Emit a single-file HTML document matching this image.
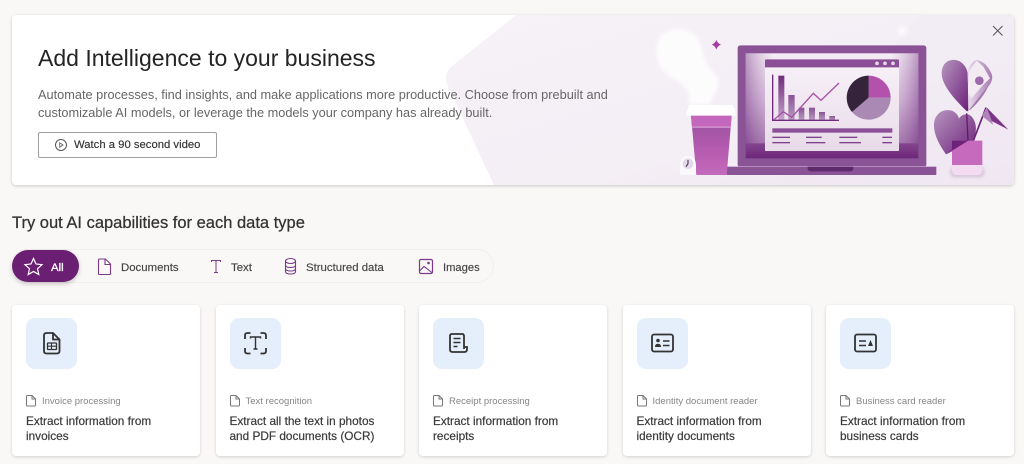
<!DOCTYPE html>
<html><head><meta charset="utf-8">
<style>
*{box-sizing:border-box}
html,body{margin:0;padding:0}
body{width:1024px;height:464px;overflow:hidden;background:#faf8f7;font-family:"Liberation Sans",sans-serif;position:relative}
.t{position:absolute;white-space:nowrap}
.banner{position:absolute;left:12px;top:15px;width:1002px;height:170px;background:#fff;border-radius:4px;box-shadow:0 1px 3px rgba(0,0,0,.2);overflow:hidden}
.card{position:absolute;top:305px;width:188px;height:151px;background:#fff;border-radius:4px;box-shadow:0 1px 3px rgba(0,0,0,.16)}
.ib{position:absolute;left:14px;top:13px;width:51px;height:51px;background:#e5eefb;border-radius:9px}
.ib svg{position:absolute;left:0;top:0}
.lbl{position:absolute;left:30px;top:90px;font-size:9.5px;line-height:13px;color:#858585;white-space:nowrap}
.doc{position:absolute;left:13px;top:90px}
.ttl{position:absolute;left:14px;top:109px;font-size:11.8px;line-height:15px;color:#3a3a3a;white-space:nowrap;-webkit-text-stroke:.2px #3a3a3a}
.tab{position:absolute;top:260.5px;font-size:11.4px;line-height:14px;color:#444;white-space:nowrap;-webkit-text-stroke:.15px #444}
</style></head><body>
<div class="banner"></div>
<svg style="position:absolute;left:0;top:0" width="1024" height="464" viewBox="0 0 1024 464">
<defs>
<linearGradient id="bg" x1="0" y1="0" x2="1" y2="1"><stop offset="0" stop-color="#f6f2f7"/><stop offset=".6" stop-color="#f4eef5"/><stop offset="1" stop-color="#f0e6f1"/></linearGradient>
<linearGradient id="scr" x1="0" y1="0" x2="0" y2="1"><stop offset="0" stop-color="#f1e6f1"/><stop offset=".45" stop-color="#c49fca"/><stop offset="1" stop-color="#6d2679"/></linearGradient>
<linearGradient id="scrs" x1="0" y1="0" x2="1" y2="0"><stop offset="0" stop-color="#8f5a9c" stop-opacity=".55"/><stop offset=".16" stop-color="#fff" stop-opacity=".3"/><stop offset=".84" stop-color="#fff" stop-opacity=".3"/><stop offset="1" stop-color="#8f5a9c" stop-opacity=".55"/></linearGradient>
<linearGradient id="win" x1="0" y1="0" x2="0" y2="1"><stop offset="0" stop-color="#f8f2f8"/><stop offset="1" stop-color="#e8dbe9"/></linearGradient>
<linearGradient id="bar" x1="0" y1="0" x2="0" y2="1"><stop offset="0" stop-color="#6f2a7c"/><stop offset="1" stop-color="#c6a4cc"/></linearGradient>
<linearGradient id="bar2" x1="0" y1="0" x2="0" y2="1"><stop offset="0" stop-color="#8a5296"/><stop offset="1" stop-color="#b9a0c0"/></linearGradient>
<linearGradient id="cup" x1="0" y1="0" x2="0" y2="1"><stop offset="0" stop-color="#99509f"/><stop offset=".6" stop-color="#b65cb0"/><stop offset="1" stop-color="#c46abc"/></linearGradient>
<linearGradient id="leaf" x1="0" y1="0" x2="1" y2="1"><stop offset="0" stop-color="#b796c0"/><stop offset="1" stop-color="#6c2279"/></linearGradient>
<linearGradient id="leaf2" x1="0" y1="0" x2="1" y2="0"><stop offset="0" stop-color="#e9dcec"/><stop offset="1" stop-color="#a77bb2"/></linearGradient>
<filter id="bl" x="-20%" y="-20%" width="140%" height="140%"><feGaussianBlur stdDeviation="6"/></filter>
<filter id="s" x="-5%" y="-5%" width="110%" height="110%"><feGaussianBlur stdDeviation=".3"/></filter>
<filter id="sh" x="-20%" y="-20%" width="140%" height="140%"><feGaussianBlur stdDeviation="4"/></filter>
<clipPath id="bc"><rect x="12" y="15" width="1002" height="170" rx="4"/></clipPath>
</defs>
<g clip-path="url(#bc)">
<path d="M516 15 L1014 15 L1014 185 L494 185 L447 84 Q443 74 452 66 Z" fill="url(#bg)"/>
<path d="M918 15 L1014 15 L1014 185 L780 185 Z" fill="#efe7f1" opacity=".3"/>
</g>
<g transform="translate(640 10) scale(.33333)" filter="url(#s)">
<path d="M50 115 Q55 58 115 58 Q175 60 186 120 Q192 160 228 195 Q246 225 220 255 L208 285 L148 285 L146 245 Q120 210 88 200 Q48 172 50 115Z" fill="#fff" opacity=".8" filter="url(#bl)"/>
<path d="M772 62 L787 46 L808 62 L790 72 L784 84Z" fill="#fff" opacity=".7" filter="url(#bl)"/>
<path d="M229 90 Q233 100 243 104 Q233 108 229 118 Q225 108 215 104 Q225 100 229 90Z" fill="#a43f9f"/>
<!-- laptop -->
<rect x="293" y="106" width="566" height="366" rx="8" fill="#8a5296"/>
<rect x="317" y="130" width="518" height="315" fill="url(#scr)"/>
<rect x="317" y="130" width="518" height="270" fill="url(#scrs)"/>
<rect x="260" y="470" width="629" height="25" fill="#8a5296"/>
<rect x="293" y="468" width="566" height="2" fill="#c9abcf"/>
<path d="M503 470H640V476Q640 484 630 484H513Q503 484 503 476Z" fill="#5f2a6c"/>
<!-- window -->
<rect x="375" y="148" width="402" height="275" rx="2" fill="url(#win)"/>
<path d="M375 172V151Q375 148 378 148H774Q777 148 777 151V172Z" fill="#8a4f96"/>
<circle cx="711" cy="160" r="5.500" fill="#e6d8ea"/><circle cx="735" cy="160" r="5.500" fill="#e6d8ea"/><circle cx="759" cy="160" r="5.500" fill="#e6d8ea"/>
<!-- chart -->
<rect x="415" y="197" width="18" height="134" fill="url(#bar)"/>
<rect x="445" y="255" width="19" height="76" fill="url(#bar2)"/>
<rect x="476" y="293" width="17" height="38" fill="url(#bar2)"/>
<rect x="507" y="293" width="18" height="38" fill="url(#bar2)"/>
<rect x="537" y="306" width="18" height="25" fill="url(#bar2)"/>
<rect x="568" y="318" width="17" height="13" fill="url(#bar2)"/>
<path d="M398 194V331H597" fill="none" stroke="#6f2a7c" stroke-width="4"/>
<path d="M401 330 L430 305 L455 322 L520 250 L543 271 L597 219" fill="none" stroke="#a850a6" stroke-width="4"/>
<!-- pie -->
<path d="M686 263 L686 197 A66 66 0 0 1 752 263Z" fill="#b451ad"/>
<path d="M686 263 L752 263 A66 66 0 0 1 636 306Z" fill="#ab89b5"/>
<path d="M686 263 L636 306 A66 66 0 0 1 686 197Z" fill="#35213a"/>
<!-- lines -->
<rect x="397" y="355" width="360" height="13" fill="#8a4f96"/>
<g fill="#7e3f8c">
<rect x="397" y="380" width="53" height="4"/><rect x="397" y="396" width="53" height="4"/>
<rect x="498" y="380" width="47" height="4"/><rect x="498" y="396" width="58" height="4"/>
<rect x="598" y="380" width="54" height="4"/><rect x="598" y="396" width="65" height="4"/>
<rect x="727" y="380" width="29" height="4"/><rect x="727" y="396" width="29" height="4"/>
</g>
<!-- cup -->
<path d="M153 317H275L260 495H169Z" fill="url(#cup)"/>
<path d="M153 317H275L272 350H156Z" fill="#c466bb"/>
<path d="M155 350H273V353H155Z" fill="#e0b0dc"/>
<path d="M148 285H278L287 307V317H140V307Z" fill="#fff"/>
<path d="M120 495V470Q120 437 144 437Q168 437 168 470V495Z" fill="#fbf8fb"/>
<circle cx="144" cy="461" r="15" fill="#e4d8ea" stroke="#cfc0d6"/>
<path d="M144 450V461L138 470" fill="none" stroke="#3c2a48" stroke-width="3"/>
<!-- plant -->
<path d="M981 304 C945 270 905 225 905 190 C905 160 925 148 945 150 C965 152 980 170 983 190Z" fill="url(#leaf)"/>
<path d="M983 190 L985 302 L981 304 Z" fill="#5f1f6c"/>
<path d="M983 190 Q985 160 1010 150 Q1040 155 1056 195 Q1060 215 1040 235 L987 302Z" fill="url(#leaf2)"/>
<path d="M986 185 L1010 152 L1030 170 L1050 205 L1032 222 L994 265 L985 250Z" fill="#f3eaf4"/>
<circle cx="1018" cy="212" r="13" fill="#9c6aa9"/>
<path d="M987 300 L1048 222 Q1030 265 990 300Z" fill="#a479ae"/>
<path d="M918 433 C895 400 880 370 882 340 C885 310 910 295 935 302 C950 308 955 318 957 326 C965 312 985 308 995 320 C1012 340 1010 365 1000 392Z" fill="url(#leaf)"/>
<path d="M980 310 L984 395" stroke="#5f1f6c" stroke-width="4" fill="none"/>
<path d="M1000 392 L1038 293" stroke="#6c2279" stroke-width="5" fill="none"/>
<path d="M1026 318 L1040 292 L1105 359Z" fill="#7c3589"/>
<path d="M1026 318 L1040 292 L1060 345Z" fill="#b183bb"/>
<rect x="930" y="470" width="104" height="32" rx="14" fill="#c9b5cf" opacity=".6" filter="url(#sh)"/>
<path d="M936 392H1027V465H936Z" fill="#c56abd"/>
<path d="M936 392H985L918 433L936 420Z" fill="#6c2279"/>
<path d="M936 465H1027V480Q1027 495 1012 495H951Q936 495 936 480Z" fill="#f3dcf2"/>
</g>
<!-- close -->
<path d="M993 26 L1002.500 35.500 M1002.500 26 L993 35.500" stroke="#555" stroke-width="1" fill="none"/>
</svg>
<div class="t" style="left:38px;top:44px;font-size:23px;line-height:28px;color:#242424">Add Intelligence to your business</div>
<div class="t" style="left:38px;top:86px;font-size:12.75px;line-height:17.5px;color:#666">Automate processes, find insights, and make applications more productive. Choose from prebuilt and<br>customizable AI models, or leverage the models your company has already built.</div>
<div style="position:absolute;left:38px;top:132px;width:179px;height:26px;border:1px solid #a0a0a0;border-radius:2px;background:#fff"></div>
<svg style="position:absolute;left:54px;top:138px" width="14" height="14" viewBox="0 0 14 14"><circle cx="7" cy="7" r="5.500" fill="none" stroke="#555"/><path d="M5.700 4.800L9 7L5.700 9.200Z" fill="none" stroke="#555" stroke-width=".8"/></svg>
<div class="t" style="left:74px;top:138px;font-size:11.3px;line-height:14px;color:#333;-webkit-text-stroke:.15px #333">Watch a 90 second video</div>

<div class="t" style="left:12px;top:213px;font-size:16.5px;line-height:20px;color:#333;-webkit-text-stroke:.25px #333">Try out AI capabilities for each data type</div>

<div style="position:absolute;left:12px;top:249px;width:482px;height:34px;border:1px solid #f1eeed;border-radius:17px"></div>
<div style="position:absolute;left:12px;top:250px;width:67px;height:32px;background:#6b1f73;border-radius:16px;box-shadow:0 2px 5px rgba(0,0,0,.2)"></div>
<svg style="position:absolute;left:0;top:0" width="500" height="290" viewBox="0 0 500 290" fill="none">
<path d="M33.500 258.500 L36 264 L42 264.700 L37.500 268.700 L38.800 274.500 L33.500 271.500 L28.200 274.500 L29.500 268.700 L25 264.700 L31 264Z" stroke="#fff" stroke-width="1.200"/>
<path d="M99.500 259H105.500L110.500 264V273.500Q110.500 274.500 109.500 274.500H99.500Q98.500 274.500 98.500 273.500V260Q98.500 259 99.500 259Z M105 259V264.500H110.500" stroke="#7a3a87" stroke-width="1.100"/>
<path d="M211.500 262V260.500H220.500V262 M216 260.500V272.500 M214 272.500H218" stroke="#7a3a87" stroke-width="1"/>
<ellipse cx="290.500" cy="261" rx="5" ry="2.500" stroke="#7a3a87" stroke-width="1.100"/>
<path d="M285.500 261V271.500Q285.500 274 290.500 274Q295.500 274 295.500 271.500V261 M285.500 265Q285.500 267.500 290.500 267.500Q295.500 267.500 295.500 265 M285.500 268.500Q285.500 271 290.500 271Q295.500 271 295.500 268.500" stroke="#7a3a87" stroke-width="1.100"/>
<rect x="419.500" y="259.500" width="13" height="14" rx="1.500" stroke="#7a3a87" stroke-width="1.200"/>
<path d="M419.500 271L424 266.500L432.500 273" stroke="#7a3a87" stroke-width="1.100"/><circle cx="428.500" cy="263" r="1.300" fill="#7a3a87"/>
</svg>
<div class="tab" style="left:51px;color:#fff;-webkit-text-stroke:.3px #fff">All</div>
<div class="tab" style="left:121px">Documents</div>
<div class="tab" style="left:231px">Text</div>
<div class="tab" style="left:306px">Structured data</div>
<div class="tab" style="left:443px;font-size:11.2px">Images</div>

<div class="card" style="left:12px">
 <div class="ib"><svg width="51" height="51" fill="none" viewBox="0 0 51 51" stroke="#333" stroke-width="1.800"><path d="M18 17.500Q18 15 20.500 15H27L33.500 21.500V33Q33.500 35.500 31 35.500H20.500Q18 35.500 18 33Z"/><path d="M27 15V21.500H33.500"/><rect x="21.500" y="25" width="9" height="6.500" rx=".5" stroke-width="1.300"/><path d="M21.500 28.200H30.500M25.500 25V31.500" stroke-width="1.100"/></svg></div>
 <svg class="doc" width="12" height="12" viewBox="0 0 12 12" fill="none" stroke="#777"><path d="M1.500 1.500Q1.500 .5 2.500 .5H7L10.500 4V10Q10.500 11 9.500 11H2.500Q1.500 11 1.500 10Z M7 .5V4H10.500"/></svg>
 <div class="lbl">Invoice processing</div>
 <div class="ttl">Extract information from<br>invoices</div>
</div>
<div class="card" style="left:215.500px">
 <div class="ib"><svg width="51" height="51" fill="none" viewBox="0 0 51 51" stroke="#333" stroke-width="1.800"><path d="M15 21V17.500Q15 15 17.500 15H20.500M30.500 15H33.500Q36 15 36 17.500V21M15 30V33Q15 35.500 17.500 35.500H20.500M30.500 35.500H33.500Q36 35.500 36 33V30"/><path d="M20.500 20.500V19H30.500V20.500M25.500 19V31M23.500 31H27.500" stroke-width="1.400"/></svg></div>
 <svg class="doc" width="12" height="12" viewBox="0 0 12 12" fill="none" stroke="#777"><path d="M1.500 1.500Q1.500 .5 2.500 .5H7L10.500 4V10Q10.500 11 9.500 11H2.500Q1.500 11 1.500 10Z M7 .5V4H10.500"/></svg>
 <div class="lbl">Text recognition</div>
 <div class="ttl">Extract all the text in photos<br>and PDF documents (OCR)</div>
</div>
<div class="card" style="left:419px">
 <div class="ib"><svg width="51" height="51" fill="none" viewBox="0 0 51 51" stroke="#333" stroke-width="1.800"><path d="M31 31V18Q31 16 29 16H19Q17 16 17 18V31.500Q17 34 19.500 34H31.500Q34 34 34 31V29H31"/><path d="M20.500 20.500H27.500M20.500 24.500H27.500M20.500 28.500H24.500" stroke-width="1.400"/></svg></div>
 <svg class="doc" width="12" height="12" viewBox="0 0 12 12" fill="none" stroke="#777"><path d="M1.500 1.500Q1.500 .5 2.500 .5H7L10.500 4V10Q10.500 11 9.500 11H2.500Q1.500 11 1.500 10Z M7 .5V4H10.500"/></svg>
 <div class="lbl">Receipt processing</div>
 <div class="ttl">Extract information from<br>receipts</div>
</div>
<div class="card" style="left:622.500px">
 <div class="ib"><svg width="51" height="51" fill="none" viewBox="0 0 51 51" stroke="#333" stroke-width="1.800"><rect x="15" y="16.500" width="21" height="17" rx="2"/><circle cx="21" cy="22.500" r="1.800" fill="#333" stroke="none"/><path d="M18 29Q18 25.800 21 25.800Q24 25.800 24 29Z" fill="#333" stroke="none"/><path d="M26 23H32.500M26 27.500H32.500" stroke-width="1.400"/></svg></div>
 <svg class="doc" width="12" height="12" viewBox="0 0 12 12" fill="none" stroke="#777"><path d="M1.500 1.500Q1.500 .5 2.500 .5H7L10.500 4V10Q10.500 11 9.500 11H2.500Q1.500 11 1.500 10Z M7 .5V4H10.500"/></svg>
 <div class="lbl">Identity document reader</div>
 <div class="ttl">Extract information from<br>identity documents</div>
</div>
<div class="card" style="left:826px">
 <div class="ib"><svg width="51" height="51" fill="none" viewBox="0 0 51 51" stroke="#333" stroke-width="1.800"><rect x="15" y="16.500" width="21" height="17" rx="2"/><path d="M19 23H26M19 27.500H26" stroke-width="1.400"/><path d="M30.500 22L33 28H28Z" fill="#333" stroke="none"/></svg></div>
 <svg class="doc" width="12" height="12" viewBox="0 0 12 12" fill="none" stroke="#777"><path d="M1.500 1.500Q1.500 .5 2.500 .5H7L10.500 4V10Q10.500 11 9.500 11H2.500Q1.500 11 1.500 10Z M7 .5V4H10.500"/></svg>
 <div class="lbl">Business card reader</div>
 <div class="ttl">Extract information from<br>business cards</div>
</div>
</body></html>
